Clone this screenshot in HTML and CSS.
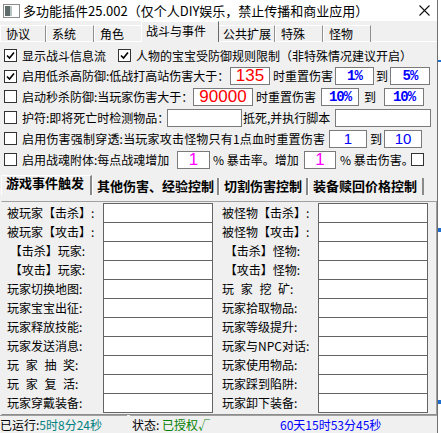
FILE: index.html
```html
<!DOCTYPE html>
<html lang="zh-CN">
<head>
  <meta charset="UTF-8" />
  <title>多功能插件25.002</title>
  <link rel="stylesheet" href="styles.css">
</head>
<body>
  <div class="app">
    <div class="window">
      <!-- 标题栏 -->
      <div class="titlebar">
        <svg class="appicon" width="17" height="14" viewBox="0 0 17 14">
          <rect x="0.5" y="0.5" width="16" height="13" fill="#fdfdfd" stroke="#8c8c8c"/>
          <rect x="2" y="2" width="5" height="10" fill="#5f6b6b"/>
          <rect x="7" y="2" width="2" height="10" fill="#b9c4c4"/>
          <rect x="9" y="2" width="6" height="10" fill="#ffffff"/>
        </svg>
        <span class="title">多功能插件25.002（仅个人DIY娱乐，禁止传播和商业应用）</span>
        <svg class="close" width="11" height="11" viewBox="0 0 11 11">
          <path d="M0.5 0.5 L10.5 10.5 M10.5 0.5 L0.5 10.5" stroke="#111" stroke-width="1.1"/>
        </svg>
      </div>

      <!-- 主选项卡 -->
      <div class="tabs">
        <span class="tab w46">协议</span>
        <span class="tab w48">系统</span>
        <span class="tab w49">角色</span>
        <span class="tab tab-on w74">战斗与事件</span>
        <span class="tab w58">公共扩展</span>
        <span class="tab w48">特殊</span>
        <span class="tab w48">怪物</span>
      </div>

      <div class="page">
        <div class="row r21">
          <span class="cb on"><svg width="11" height="11" viewBox="0 0 11 11"><path d="M2 5.5 L4.5 8 L9 2.5" fill="none" stroke="#000" stroke-width="1.6"/></svg></span>
          <span class="lbl w96">显示战斗信息流</span>
          <span class="cb on"><svg width="11" height="11" viewBox="0 0 11 11"><path d="M2 5.5 L4.5 8 L9 2.5" fill="none" stroke="#000" stroke-width="1.6"/></svg></span>
          <span class="lbl">人物的宝宝受防御规则限制（非特殊情况建议开启）</span>
        </div>

        <div class="row r20">
          <span class="cb on"><svg width="11" height="11" viewBox="0 0 11 11"><path d="M2 5.5 L4.5 8 L9 2.5" fill="none" stroke="#000" stroke-width="1.6"/></svg></span>
          <span class="lbl w208">启用低杀高防御:低战打高站伤害大于：</span>
          <span class="field w40 red">135</span>
          <span class="lbl w65 pl3">时重置伤害</span>
          <span class="field w39 blue pct">1%</span>
          <span class="lbl w16 pl2">到</span>
          <span class="field w40 blue pct">5%</span>
        </div>

        <div class="row r21">
          <span class="cb"></span>
          <span class="lbl w171">启动秒杀防御:当玩家伤害大于：</span>
          <span class="field w60 red">90000</span>
          <span class="lbl w68 pl3">时重置伤害</span>
          <span class="field w38 blue pct">10%</span>
          <span class="lbl w25 pl5">到</span>
          <span class="field w40 blue pct">10%</span>
        </div>

        <div class="row r21">
          <span class="cb"></span>
          <span class="lbl w145">护符:即将死亡时检测物品：</span>
          <span class="field w75"></span>
          <span class="lbl w93 pl1">抵死,并执行脚本</span>
          <span class="field w96"></span>
        </div>

        <div class="row r21">
          <span class="cb"></span>
          <span class="lbl w307 wide">启用伤害强制穿透:当玩家攻击怪物只有1点血时重置伤害</span>
          <span class="field w38 blue">1</span>
          <span class="lbl w17 pl3">到</span>
          <span class="field w38 blue">10</span>
        </div>

        <div class="row r21">
          <span class="cb"></span>
          <span class="lbl w155">启用战魂附体:每点战魂增加</span>
          <span class="field w33 pink">1</span>
          <span class="lbl w94 pl3">% 暴击率。增加</span>
          <span class="field w32 pink">1</span>
          <span class="lbl w75 pl4">% 暴击伤害。</span>
          <span class="cb"></span>
        </div>

        <!-- 子选项卡 -->
        <div class="subtabs">
          <span class="subtab subtab-on w91">游戏事件触发</span>
          <span class="subtab w127">其他伤害、经验控制</span>
          <span class="subtab w89">切割伤害控制</span>
          <span class="subtab w116">装备赎回价格控制</span>
        </div>

        <div class="panel">
          <div class="col">
            <div class="prow"><span class="plbl">被玩家【击杀】:</span><span class="box"></span></div>
            <div class="prow"><span class="plbl">被玩家【攻击】:</span><span class="box"></span></div>
            <div class="prow"><span class="plbl">&nbsp;【击杀】玩家:</span><span class="box"></span></div>
            <div class="prow"><span class="plbl">&nbsp;【攻击】玩家:</span><span class="box"></span></div>
            <div class="prow"><span class="plbl">玩家切换地图:</span><span class="box"></span></div>
            <div class="prow"><span class="plbl">玩家宝宝出征:</span><span class="box"></span></div>
            <div class="prow"><span class="plbl">玩家释放技能:</span><span class="box"></span></div>
            <div class="prow"><span class="plbl">玩家发送消息:</span><span class="box"></span></div>
            <div class="prow"><span class="plbl spaced">玩 家 抽 奖:</span><span class="box"></span></div>
            <div class="prow"><span class="plbl spaced">玩 家 复 活:</span><span class="box"></span></div>
            <div class="prow"><span class="plbl">玩家穿戴装备:</span><span class="box"></span></div>
          </div>
          <div class="col">
            <div class="prow"><span class="plbl">被怪物【击杀】:</span><span class="box"></span></div>
            <div class="prow"><span class="plbl">被怪物【攻击】:</span><span class="box"></span></div>
            <div class="prow"><span class="plbl">&nbsp;【击杀】怪物:</span><span class="box"></span></div>
            <div class="prow"><span class="plbl">&nbsp;【攻击】怪物:</span><span class="box"></span></div>
            <div class="prow"><span class="plbl spaced">玩 家 挖 矿:</span><span class="box"></span></div>
            <div class="prow"><span class="plbl">玩家拾取物品:</span><span class="box"></span></div>
            <div class="prow"><span class="plbl">玩家等级提升:</span><span class="box"></span></div>
            <div class="prow"><span class="plbl">玩家与NPC对话:</span><span class="box"></span></div>
            <div class="prow"><span class="plbl">玩家使用物品:</span><span class="box"></span></div>
            <div class="prow"><span class="plbl">玩家踩到陷阱:</span><span class="box"></span></div>
            <div class="prow"><span class="plbl">玩家卸下装备:</span><span class="box"></span></div>
          </div>
        </div>
      </div>

      <!-- 状态栏 -->
      <div class="statusbar">
        <div class="sb sb-left">已运行:<span class="teal">5时8分24秒</span></div>
        <div class="sb sb-right">状态: <span class="green">已授权√</span><span class="timer">60天15时53分45秒</span></div>
      </div>
    </div>
    <div class="edge"></div>
  </div>
</body>
</html>
```

FILE: styles.css
```css
body {
  margin: 0;
  font-family: "Noto Sans CJK SC", "Liberation Sans", sans-serif;
  font-size: 12px;
  color: #000;
  background-color: #ffffff;
}

.app {
  display: flex;
  width: 441px;
  height: 433px;
  overflow: hidden;
}

.window {
  width: 437px;
  display: flex;
  flex-direction: column;
  background-color: #f0f0f0;
}

.edge {
  width: 3px;
  border-left: 1px solid #707070;
  background: linear-gradient(#ffffff 0 60px, #1c6fd0 60px 62px, #ffffff 62px 228px, #1c6fd0 228px 232px, #ffffff 232px 400px, #1c6fd0 400px 404px, #ffffff 404px);
}

/* 标题栏 */
.titlebar {
  height: 21px;
  background-color: #ffffff;
  display: flex;
  align-items: center;
  padding-left: 3px;
}

.appicon {
  margin-right: 3px;
}

.title {
  font-size: 13px;
  line-height: 16px;
  flex: 1;
  white-space: nowrap;
}

.close {
  margin-right: 7px;
}

/* 主选项卡 */
.tabs {
  height: 21px;
  display: flex;
  align-items: flex-end;
  border-bottom: 1px solid #ffffff;
  box-sizing: border-box;
}

.tab {
  height: 17px;
  box-sizing: border-box;
  border-top: 1px solid #ffffff;
  border-left: 1px solid #ffffff;
  border-right: 1px solid #8f8f8f;
  padding-left: 5px;
  line-height: 16px;
  white-space: nowrap;
  margin-bottom: -1px;
}

.tab-on {
  height: 21px;
  line-height: 17px;
  padding-left: 4px;
  margin-left: -2px;
  margin-right: -2px;
  position: relative;
  background-color: #f0f0f0;
  border-right: 1px solid #696969;
}

/* 行 */
.page {
  flex: 1;
  padding-top: 3px;
}

.row {
  display: flex;
  align-items: center;
  padding-left: 4px;
  white-space: nowrap;
}

.r20 { height: 20px; }
.r21 { height: 21px; }

.cb {
  width: 13px;
  height: 13px;
  box-sizing: border-box;
  border: 1px solid #333333;
  background-color: #ffffff;
  margin-right: 5px;
  display: flex;
  align-items: center;
  justify-content: center;
}

.lbl {
  line-height: 16px;
  flex: none;
  box-sizing: border-box;
}

.wide { letter-spacing: 0.2px; }

.field {
  height: 18px;
  box-sizing: border-box;
  border: 1px solid #7a7a7a;
  background-color: #ffffff;
  text-align: center;
  font-family: "Liberation Sans", sans-serif;
  font-size: 16px;
  line-height: 16px;
  flex: none;
}

.red { color: #ff0000; font-size: 17px; }
.blue { color: #0000ff; font-size: 15px; }
.pink { color: #ff00ff; font-size: 17px; }
.pct {
  font-family: "Liberation Mono", monospace;
  font-weight: bold;
  font-size: 14px;
  letter-spacing: -1px;
}

.pl1 { padding-left: 1px; }
.pl2 { padding-left: 2px; }
.pl3 { padding-left: 3px; }
.pl4 { padding-left: 4px; }
.pl5 { padding-left: 5px; }

.w16 { width: 16px; }
.w17 { width: 17px; }
.w25 { width: 25px; }
.w32 { width: 32px; }
.w33 { width: 33px; }
.w38 { width: 38px; }
.w39 { width: 39px; }
.w40 { width: 40px; }
.w46 { width: 46px; }
.w48 { width: 48px; }
.w49 { width: 49px; }
.w58 { width: 58px; }
.w60 { width: 60px; }
.w65 { width: 65px; }
.w68 { width: 68px; }
.w74 { width: 78px; }
.w75 { width: 75px; }
.w89 { width: 89px; }
.w91 { width: 91px; }
.w93 { width: 93px; }
.w94 { width: 94px; }
.w96 { width: 96px; }
.w116 { width: 116px; }
.w127 { width: 127px; }
.w145 { width: 145px; }
.w155 { width: 155px; }
.w171 { width: 171px; }
.w208 { width: 208px; }
.w307 { width: 307px; }

/* 子选项卡 */
.subtabs {
  margin-top: 5px;
  height: 20px;
  display: flex;
  align-items: flex-end;
  padding-left: 1px;
}

.subtab {
  height: 17px;
  box-sizing: border-box;
  border-left: 1px solid #ffffff;
  border-right: 2px solid #8a8a8a;
  padding-left: 4px;
  font-size: 13px;
  font-weight: bold;
  line-height: 15px;
  white-space: nowrap;
}

.subtab-on {
  height: 20px;
  line-height: 14px;
  border-top: 1px solid #ffffff;
  padding-left: 4px;
}

/* 事件面板 */
.panel {
  margin-top: 6px;
  height: 214px;
  box-sizing: border-box;
  border: 1px solid #a0a0a0;
  border-left-color: #f0f0f0;
  border-bottom-color: #8c8c8c;
  margin-left: 1px;
  padding: 1px 0 0 5px;
  display: flex;
  gap: 9px;
}

.col {
  display: flex;
  flex-direction: column;
}

.prow {
  display: flex;
  height: 19px;
  align-items: flex-start;
}

.plbl {
  width: 96px;
  line-height: 19px;
  white-space: pre;
}

.spaced {
  word-spacing: 4px;
}

.box {
  width: 110px;
  height: 20px;
  box-sizing: border-box;
  border: 1px solid #646464;
  background-color: #ffffff;
}

/* 状态栏 */
.statusbar {
  height: 18px;
  display: flex;
  gap: 3px;
}

.sb {
  border-top: 1px solid #a0a0a0;
  line-height: 17px;
  white-space: pre;
}

.sb-left {
  width: 127px;
}

.sb-right {
  flex: 1;
  display: flex;
  padding-left: 2px;
}

.teal { color: #008080; }
.green { color: #008000; }
.timer {
  color: #0000ff;
  margin-left: 70px;
}
```
